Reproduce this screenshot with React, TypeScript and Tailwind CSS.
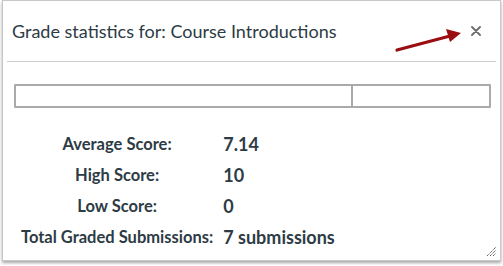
const stats = [
  { label: "Average Score:", value: "7.14" },
  { label: "High Score:", value: "10" },
  { label: "Low Score:", value: "0" },
  { label: "Total Graded Submissions:", value: "7 submissions" },
]

export default function App() {
  return (
    <div className="relative w-[503px] h-[266px] bg-white" style={{ fontFamily: "Lato, 'Open Sans', sans-serif" }}>
      <div className="relative ml-[2px] w-[499px] h-[261px] border border-[#c8c8c8] bg-white shadow-[0_2px_3px_rgba(0,0,0,0.35)]">
        <div className="flex items-center justify-between h-[60px] pl-[9px] pr-[19px]">
          <h2 className="text-[18px] text-[#2d3b45]">Grade statistics for: Course Introductions</h2>
          <button aria-label="Close">
            <svg width="10" height="10" viewBox="0 0 10 10">
              <path d="M1 1 L9 9 M9 1 L1 9" stroke="#6b6b6b" strokeWidth="1.8" strokeLinecap="round" />
            </svg>
          </button>
        </div>
        <div className="mx-[4px] h-px bg-[#c7cdd1]" />

        <div className="mt-[22px] ml-[11px] w-[477px] h-[24px] flex border-2 border-[#aaaaaa] rounded-[1px]">
          <div className="w-[337px] h-full border-r-2 border-[#aaaaaa]" />
          <div className="flex-1 h-full" />
        </div>

        <div className="mt-[21px] ml-[18px] grid grid-cols-[auto_auto] justify-start gap-x-[10px] font-bold text-[#2d3b45]">
          {stats.map((s) => (
            <div key={s.label} className="contents">
              <div className="text-center text-[16.5px] h-[31px] leading-[31px]">{s.label}</div>
              <div className="text-[18px] h-[31px] leading-[31px]">{s.value}</div>
            </div>
          ))}
        </div>

        <svg className="absolute right-[3px] bottom-[3px]" width="11" height="11" viewBox="0 0 11 11">
          <path d="M1 10 L10 1 M4 10 L10 4 M7 10 L10 7" stroke="#333" strokeWidth="0.9" strokeDasharray="1.2 0.8" />
        </svg>
      </div>

      <svg className="absolute left-0 top-0 pointer-events-none" width="503" height="266">
        <line x1="397" y1="50" x2="450" y2="36" stroke="#9a0e12" strokeWidth="3.2" strokeLinecap="round" />
        <polygon points="461,33 446,29 450,42" fill="#9a0e12" />
      </svg>
    </div>
  )
}
